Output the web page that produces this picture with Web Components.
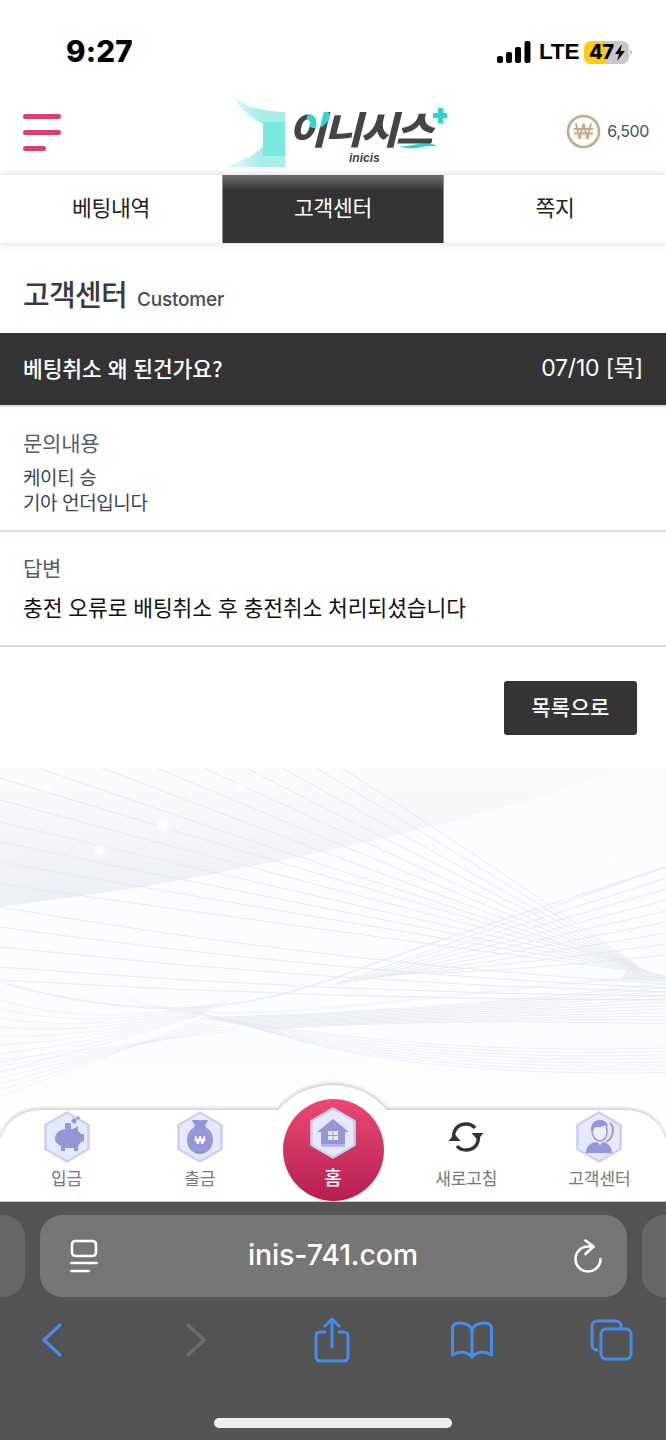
<!DOCTYPE html>
<html lang="ko"><head><meta charset="utf-8"><title>inicis</title>
<style>
html,body{margin:0;padding:0;background:#fff}
body{width:666px;height:1440px;overflow:hidden;font-family:"Noto Sans CJK KR","Noto Sans",sans-serif}
</style></head><body>
<app-shell>
  <status-bar></status-bar>
  <site-header></site-header>
  <tab-bar>
    <tab-item>베팅내역</tab-item>
    <tab-item active>고객센터</tab-item>
    <tab-item>쪽지</tab-item>
  </tab-bar>
  <page-title sub="Customer">고객센터</page-title>
  <inquiry-head date="07/10 [목]">베팅취소 왜 된건가요?</inquiry-head>
  <qa-block label="문의내용" pad="20" small>케이티 승<br>기아 언더입니다</qa-block>
  <qa-block label="답변" pad="20">충전 오류로 배팅취소 후 충전취소 처리되셨습니다</qa-block>
  <list-action>목록으로</list-action>
  <art-backdrop>
    <bottom-nav>
      <nav-item icon="pig">입금</nav-item>
      <nav-item icon="bag">출금</nav-item>
      <nav-item icon="home" home>홈</nav-item>
      <nav-item icon="refresh">새로고침</nav-item>
      <nav-item icon="agent">고객센터</nav-item>
    </bottom-nav>
  </art-backdrop>
  <browser-chrome></browser-chrome>
</app-shell>
<script>
const KR='"Noto Sans CJK KR","Noto Sans",sans-serif';
function def(name,build,attach){
  customElements.define(name,class extends HTMLElement{
    connectedCallback(){
      if(this.shadowRoot)return;
      const r=this.attachShadow({mode:'open'});
      r.innerHTML=build(this);
      if(attach)attach(this,r);
    }
  });
}
def('app-shell',()=>`<style>:host{display:flex;flex-direction:column;width:666px;height:1440px;background:#fff;overflow:hidden;color:#333;font-family:${KR}}</style><slot></slot>`);

def('status-bar',()=>`<style>
:host{display:flex;align-items:center;justify-content:space-between;height:95px;padding:9px 34px 0 66px;box-sizing:border-box;background:#fff;color:#000}
.t{font:800 29.500px/1 Inter,sans-serif;letter-spacing:.2px}
.r{display:flex;align-items:center;gap:8px}
.lte{font:700 22.500px/1 "Liberation Sans",sans-serif;letter-spacing:-.2px;width:37px}
.bat{position:relative;width:45px;height:23px;border-radius:7px;overflow:hidden;background:linear-gradient(90deg,#ffcc0a 47%,#c8c8c8 47%);display:flex;align-items:center;padding-left:5px;box-sizing:border-box;font:800 20px/1 Inter,sans-serif;letter-spacing:-.5px}
.wrap{display:flex;align-items:center;gap:1px}
</style>
<span class="t">9:27</span>
<span class="r">
<svg width="34" height="22" viewBox="0 0 34 22"><g fill="#000"><rect x="0" y="15" width="6" height="7" rx="2"/><rect x="9" y="11" width="6" height="11" rx="2"/><rect x="18" y="6" width="6" height="16" rx="2"/><rect x="27.500" y="0" width="6" height="22" rx="2"/></g></svg>
<span class="lte">LTE</span>
<span class="wrap"><span class="bat">47<svg width="12" height="19" viewBox="0 0 12 19"><path d="M8 1 1 11h4l-2 7 8-10H6.500z" fill="#000"/></svg></span><svg width="2" height="9" viewBox="0 0 3 9"><path d="M0 0c2 .5 3 2 3 4.500S2 8.500 0 9z" fill="#ccc"/></svg></span>
</span>`);

def('site-header',()=>`<style>
:host{display:grid;grid-template-columns:1fr auto 1fr;align-items:center;height:80px;background:#fff;position:relative;z-index:1}
.menu{display:flex;flex-direction:column;gap:11px;margin:0 0 5px 23px;width:38px}
.menu i{display:block;height:5px;border-radius:3px;background:#da3f6d}
.menu i:last-child{width:23px}
.right{justify-self:end;display:flex;align-items:center;gap:6px;padding:0 17px 8px 0;font:400 16px/1 Inter,sans-serif;color:#3c5169;letter-spacing:-.4px}
site-logo{margin-left:8px}
</style>
<div class="menu"><i></i><i></i><i></i></div>
<site-logo></site-logo>
<div class="right"><svg width="35" height="35" viewBox="0 0 35 35" fill="none" stroke="#c9a98c"><circle cx="17.500" cy="17.500" r="15.500" stroke-width="2.600"/><path d="M10 9.500 13.500 25l4-15.500L21.500 25 25 9.500M8 15h19M8 19.500h19" stroke-width="2"/></svg><span>6,500</span></div>`);

def('site-logo',()=>`<style>
:host{display:block;position:relative;width:220px;height:72px;margin-top:-7px}
svg.i{position:absolute;left:0;top:0}
.w{position:absolute;left:60px;top:11px;font:900 38px/42px ${KR};letter-spacing:-2.4px;white-space:nowrap;transform:skewX(-14deg) scaleX(1.1);transform-origin:left bottom;
background:radial-gradient(circle at 21px 11px,#2fd5cf 0 10px,#454545 10.500px);-webkit-background-clip:text;background-clip:text;-webkit-text-fill-color:transparent}
.en{position:absolute;left:122px;top:56px;font:italic 700 12px/1 "Liberation Sans",sans-serif;color:#444}
</style>
<svg class="i" width="220" height="72" viewBox="0 0 220 72">
<defs><pattern id="d" width="1.800" height="1.800" patternUnits="userSpaceOnUse"><rect width="1.800" height="1.800" fill="#e6fbf9"/><circle cx=".9" cy=".9" r=".72" fill="#58ddd7"/></pattern>
<linearGradient id="fa" x1="0" y1="0" x2="1" y2="0"><stop offset="0" stop-color="#fff" stop-opacity=".75"/><stop offset=".6" stop-color="#fff" stop-opacity="0"/></linearGradient></defs>
<path d="M6 1C17 9 30 15 58 16V71H0C13 65 28 60 36 50V28C24 23 14 12 6 1Z" fill="url(#d)"/>
<path d="M6 1C17 9 30 15 58 16V71H0C13 65 28 60 36 50V28C24 23 14 12 6 1Z" fill="url(#fa)"/>
<rect x="36" y="26" width="22" height="34" fill="#7ae7e1"/>
<path d="M211 12h5v5h5v5h-5v5h-5v-5h-5v-5h5z" fill="#2dd4cf"/>
<path d="M172 50c9 1 20-3 28-3 4 .3 7 1.500 10 3-7 0-11 0-17 1.500-7 1.500-15 1-21-1.500z" fill="#2dd4cf"/>
</svg>
<span class="w">이니시스</span>
<span class="en">inicis</span>`);

def('tab-bar',()=>`<style>:host{display:flex;height:68px;background:#fff;box-shadow:0 0 7px rgba(40,40,60,.22);position:relative;z-index:2}::slotted(*){flex:1 1 0}</style><slot></slot>`);
def('tab-item',e=>`<style>:host{display:flex;align-items:center;justify-content:center;font:400 21.500px/1 ${KR};color:#222;padding-bottom:5px;box-sizing:border-box;letter-spacing:-.3px}
:host([active]){color:#fff;background:linear-gradient(#6d6d70,#343434 16px);box-shadow:inset 1px 0 #8f8f8f,inset -1px 0 #8f8f8f}</style><slot></slot>`);

def('page-title',e=>`<style>:host{display:flex;align-items:baseline;gap:10px;height:90px;box-sizing:border-box;padding:28px 23px 0;font:500 29px/44px ${KR};color:#3a3a3a;letter-spacing:-.7px}
.s{font:500 19px/1 Inter,sans-serif;color:#494b5e;letter-spacing:-.2px}</style><slot></slot><span class="s">${e.getAttribute('sub')}</span>`);

def('inquiry-head',e=>`<style>:host{display:flex;justify-content:space-between;align-items:center;height:74px;box-sizing:border-box;padding:0 23px 2px;background:#343434;color:#fff;font:500 21.500px/1 ${KR};border-bottom:2px solid #d9d9ea;letter-spacing:-.1px}
.d{font:400 23px/1 Inter,${KR};letter-spacing:-.2px}</style><span><slot></slot></span><span class="d">${e.getAttribute('date')}</span>`);

def('qa-block',e=>{
 const small=e.hasAttribute('small');
 return `<style>:host{display:block;box-sizing:border-box;padding:${e.getAttribute('pad')}px 23px 0;border-bottom:2px solid #dcdce8;height:${small?125:115}px}
.l{font:400 21px/30px ${KR};color:#575b6a;letter-spacing:-.2px}
.b{margin-top:${small?7:9}px;font:${small?'400 19px/25px':'400 21.500px/32px'} ${KR};color:${small?'#3f4256':'#111'};letter-spacing:${small?'-.4px':'-.1px'}}</style>
<div class="l">${e.getAttribute('label')}</div><div class="b"><slot></slot></div>`});

def('list-action',()=>`<style>:host{display:flex;justify-content:flex-end;height:121px;box-sizing:border-box;padding:34px 29px 0 0}
.btn{width:133px;height:54px;background:#343434;border-radius:3px;color:#fff;font:500 21px/50px ${KR};text-align:center;letter-spacing:.3px}</style><div class="btn"><slot></slot></div>`);

function lines(){
 let o='';
 const q=(a,b,c,d,e,f,w=1,op=.85)=>`<path d="M${a} ${b}Q${c} ${d} ${e} ${f}" stroke-width="${w}" opacity="${op}"/>`;
 [38,102,157,204,246,282,316,342].forEach((x,i)=>{o+=q(x,768,(x+637)/2+6,(768+967)/2+6-i,637+i,967+i/2)});
 [778,800,822,842,862,884].forEach((y,i)=>{o+=q(0,y,330,(y+967)/2+6,640+i*2,968+i)});
 [907,927,947,967,980].forEach((y,i)=>{o+=q(0,y,330,(y+972)/2+24,666,984+i*4)});
 for(let i=0;i<9;i++){const y=867+i*11;o+=q(330+i*8,986-i*1.5,500,925+i*6,666,y,1,.8)}
 for(let i=0;i<9;i++){o+=q(230-i*4,1000+i*2,100,1030+i*2,0,1000+i*9,1,.45)}
 for(let i=0;i<7;i++){o+=q(240-i*6,1030-i*2,100,1048+i*2,0,1060+i*6,1,.4)}
 for(let i=0;i<12;i++){o+=q(200+i*6,1018+i,430,1012+i*.6,666,984+i*3.600,1,.7)}
 for(let i=0;i<8;i++){o+=q(190+i*12,1012+i*3,410,1056+i*3,666,1048+i*3.500,1,.6)}
 return o;
}
def('art-backdrop',()=>`<style>:host{display:block;position:relative;height:433px;background:#fff}
svg{position:absolute;left:0;top:0;display:block}</style>
<svg width="666" height="433" viewBox="0 768 666 433" fill="none">
<defs>
<linearGradient id="top" x1="0" y1="768" x2="0" y2="910" gradientUnits="userSpaceOnUse"><stop offset="0" stop-color="#fbfbfc"/><stop offset="1" stop-color="#ebeef4"/></linearGradient>
<linearGradient id="body" x1="0" y1="768" x2="0" y2="1130" gradientUnits="userSpaceOnUse"><stop offset="0" stop-color="#fbfcfd"/><stop offset=".8" stop-color="#fbfcfd"/><stop offset="1" stop-color="#fff"/></linearGradient>
<radialGradient id="dot"><stop offset="0" stop-color="#fff"/><stop offset="1" stop-color="#fff" stop-opacity="0"/></radialGradient>
</defs>
<rect x="0" y="768" width="666" height="362" fill="url(#body)"/>
<path d="M0 768H624C560 792 490 812 425 828 340 850 255 866 160 884 100 894 50 900 0 907Z" fill="url(#top)"/>
<g stroke="#e3e7f0">${lines()}</g>
<path d="M0 982C60 1000 130 1010 190 1008 260 1005 320 985 365 967 430 942 550 905 666 867" stroke="#e5e8f0" stroke-width="2" opacity=".6"/>
<path d="M130 1000C200 1022 300 1012 430 998 530 988 600 978 666 976" stroke="#e6e9f1" stroke-width="3" opacity=".3"/>
<path d="M630 966 666 976V982L620 980Z" fill="#e6e9f1" opacity=".7"/>
<circle cx="46" cy="788" r="7" fill="url(#dot)"/><circle cx="240" cy="787" r="7" fill="url(#dot)"/><circle cx="164" cy="825" r="9" fill="url(#dot)"/><circle cx="100" cy="851" r="9" fill="url(#dot)"/><circle cx="610" cy="860" r="8" fill="url(#dot)"/>
</svg><slot></slot>`);

def('bottom-nav',()=>`<style>:host{position:absolute;left:0;right:0;bottom:0;height:116px;display:flex;align-items:flex-end}
svg.bg{position:absolute;left:0;top:0;overflow:visible;filter:drop-shadow(0 -1px 2px rgba(0,0,0,.28))}
::slotted(*){flex:1 1 0;position:relative}</style>
<svg class="bg" width="666" height="116" viewBox="0 0 666 116"><path d="M0 116V55C6 36 20 25 42 25H278A72 72 0 0 1 387 25H624C646 25 660 36 666 55V116Z" fill="#fff"/></svg><slot></slot>`);

const G='#9496d6';
const glyph={
 pig:`<path d="M11 28c0-6 5-10 12-10h6l5-3v5l3 3h3v7l-3 1-3 4v5h-4v-3h-9v3h-4v-5c-4-2-6-4-6-7z" fill="${G}"/><circle cx="30" cy="10" r="2.500" fill="${G}"/><circle cx="34" cy="7" r="1.800" fill="${G}"/><rect x="21" y="12" width="6" height="6" rx="1" fill="${G}"/>`,
 bag:`<path d="M15 9h16l-3 6h-10z" fill="${G}"/><ellipse cx="23" cy="29" rx="13" ry="14" fill="${G}"/><rect x="17" y="15" width="12" height="2.500" fill="${G}"/><text x="23" y="33" font-family="Liberation Sans,sans-serif" font-size="11" font-weight="700" fill="#fff" text-anchor="middle">₩</text>`,
 home:`<path d="M23 12 7 25h4v15h24V25h4z" fill="${G}"/><rect x="11" y="37" width="24" height="3" fill="#b5b6e6"/><g fill="#e8e9fb"><rect x="18" y="24" width="4.500" height="4"/><rect x="23.500" y="24" width="4.500" height="4"/><rect x="18" y="29" width="4.500" height="4"/><rect x="23.500" y="29" width="4.500" height="4"/></g>`,
 agent:`<path d="M16 20c0-6 4-9 8-9s7 3 7 9-3 10-7 10-8-4-8-10z" fill="#eef0fd" stroke="${G}" stroke-width="1.500"/><path d="M15 19c0-7 4-10 9-10 4 0 7 2 8 6-3-2-5 1-8 1-3 0-4 0-6 1l-1 4z" fill="${G}"/><path d="M10 42c0-7 5-11 11-11l3 3 3-3c5 1 9 5 9 11z" fill="${G}"/><path d="M34 12c4 3 4 12-1 17l-3 2" fill="none" stroke="${G}" stroke-width="1.800"/>`
};
def('hex-icon',e=>`<style>:host{display:block;width:46px;height:52px}svg{display:block}</style>
<svg width="46" height="52" viewBox="0 0 46 52"><path d="M23 1.500 44.500 14v24L23 50.500 1.500 38V14Z" fill="#e6e9fb" stroke="#cbd0f0" stroke-width="2.600" stroke-linejoin="round"/>${glyph[e.getAttribute('name')]}</svg>`);
def('nav-item',e=>{
 const ic=e.getAttribute('icon'),home=e.hasAttribute('home');
 const icon=ic==='refresh'
  ?`<svg width="46" height="52" viewBox="0 0 46 52" fill="none" stroke="#333" stroke-width="3.400"><path d="M10.500 26c0-8 5-13 12.500-13 4 0 7 1.500 9 4"/><path d="M35.500 26c0 8-5 13-12.500 13-4 0-7-1.500-9-4"/><path d="M28.500 22h12l-6 7z" fill="#333" stroke="none"/><path d="M17.500 30h-12l6-7z" fill="#333" stroke="none"/></svg>`
  :`<hex-icon name="${ic}"></hex-icon>`;
 return `<style>:host{display:flex;flex-direction:column;align-items:center;height:92px;box-sizing:border-box;padding-top:2px;font:400 17px/24px ${KR};color:#787878;letter-spacing:-.1px}
:host([home]){height:102px;padding-top:8px;color:#fff;font-size:19px;font-weight:500}
.disc{position:absolute;left:50%;top:0;width:101px;height:102px;margin-left:-50.5px;border-radius:50%;background:linear-gradient(#ea4a72,#b61e52)}
.ic,.lb{position:relative}
.ic{height:52px;display:block}.lb{margin-top:3px}
:host([home]) .lb{margin-top:6px}</style>
${home?'<div class="disc"></div>':''}<div class="ic">${icon}</div><div class="lb"><slot></slot></div>`});

def('browser-chrome',()=>`<style>
:host{display:block;height:239px;background:#545454;border-top:1px solid #c8c8c8;box-sizing:border-box;color:#fff;position:relative;z-index:3}
.row{display:flex;align-items:stretch;gap:15px;height:82px;margin-top:13px;justify-content:center}
.stub{flex:0 0 25px;background:#686868}
.stub.l{border-radius:0 22px 22px 0}.stub.r{border-radius:22px 0 0 22px}
.url{flex:0 0 587px;background:#767676;border-radius:22px;display:grid;grid-template-columns:1fr auto 1fr;align-items:center;padding:0 25px 0 30px;box-sizing:border-box}
.url svg:last-child{justify-self:end}
.host{font:500 28.500px/1 Inter,"Liberation Sans",sans-serif;color:#fff;letter-spacing:-.1px;margin:0 0 2px -5px}
.tools{display:flex;justify-content:space-between;align-items:center;padding:0 32px 0 30px;height:44px;margin-top:21px}
.tools span{width:44px;display:flex;justify-content:center}
.tools span.fw{padding-left:8px;box-sizing:border-box}
svg{display:block}
.h{width:238px;height:10px;background:#eee;border-radius:5px;margin:56px auto 0}
</style>
<div class="row"><div class="stub l"></div>
<div class="url">
<svg width="28" height="34" viewBox="0 0 28 34" fill="none" stroke="#fff" stroke-width="2.600" stroke-linecap="round"><rect x="2" y="2" width="24" height="15" rx="3.500"/><path d="M1.500 24h25M1.500 32h17"/></svg>
<span class="host">inis-741.com</span>
<svg width="28" height="34" viewBox="0 0 28 34" fill="none" stroke="#fff" stroke-width="2.600" stroke-linecap="round" stroke-linejoin="round"><path d="M14 7.500h5M14 7.500A12.500 12.500 0 1 0 26.500 20"/><path d="M11.500 1.500 19.500 7.500 11.500 15"/></svg>
</div><div class="stub r"></div></div>
<div class="tools">
<span><svg width="22" height="34" viewBox="0 0 22 34" fill="none" stroke="#428df0" stroke-width="3.200" stroke-linecap="round" stroke-linejoin="round"><path d="M19 2 3 17l16 15"/></svg></span>
<span class="fw"><svg width="22" height="34" viewBox="0 0 22 34" fill="none" stroke="#6e6e6e" stroke-width="3.200" stroke-linecap="round" stroke-linejoin="round"><path d="M3 2l16 15L3 32"/></svg></span>
<span><svg width="36" height="46" viewBox="0 0 36 46" fill="none" stroke="#428df0" stroke-width="3" stroke-linecap="round" stroke-linejoin="round"><path d="M11 15H6a4 4 0 0 0-4 4v21a4 4 0 0 0 4 4h24a4 4 0 0 0 4-4V19a4 4 0 0 0-4-4h-5"/><path d="M18 30V3M11 9l7-7 7 7"/></svg></span>
<span><svg width="44" height="38" viewBox="0 0 44 38" fill="none" stroke="#428df0" stroke-width="3" stroke-linejoin="round"><path d="M22 8C19 3 14 2 9 2 5 2 2.500 4 2.500 8v26c6-4 14-4 19.500 2 5.500-6 13.500-6 19.500-2V8c0-4-2.500-6-6.500-6-5 0-10 1-13 6ZM22 8v27"/></svg></span>
<span><svg width="44" height="42" viewBox="0 0 44 42" fill="none" stroke="#428df0" stroke-width="3"><path d="M8 31H7a5 5 0 0 1-5-5V7a5 5 0 0 1 5-5h19a5 5 0 0 1 5 5v2"/><rect x="11" y="10" width="30" height="30" rx="5"/></svg></span>
</div>
<div class="h"></div>`);
</script>
</body></html>
